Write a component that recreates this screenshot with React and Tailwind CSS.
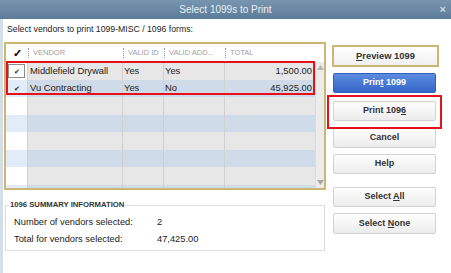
import { Fragment } from "react";

const rows = [
  { vendor: "Middlefield Drywall", validId: "Yes", validAddr: "Yes", total: "1,500.00", checked: true, focus: true },
  { vendor: "Vu Contracting", validId: "Yes", validAddr: "No", total: "45,925.00", checked: true },
  {}, {}, {}, {}, {}, {},
];

const Sep = () => (
  <span className="h-[10px] border-l border-dotted border-[#9a9a9a] mr-[4px] shrink-0" />
);

const Btn = ({ children, className = "" }) => (
  <div
    className={`w-[103px] ml-[1px] h-[20px] flex items-center justify-center rounded-[2px] border border-[#d2d2d2] bg-gradient-to-b from-[#fefefe] to-[#ececec] text-[9px] font-bold text-[#333] ${className}`}
  >
    {children}
  </div>
);

export default function App() {
  return (
    <div className="relative w-[451px] h-[273px] overflow-hidden bg-white flex flex-col font-['Liberation_Sans',Arial,sans-serif]">
      {/* Title bar */}
      <div className="h-[19px] shrink-0 grid grid-cols-[1fr_auto_1fr] items-center bg-gradient-to-b from-[#7895b0] to-[#5c7c99]">
        <span />
        <span className="text-[10px] text-[#eaf0f5]">Select 1099s to Print</span>
        <span className="justify-self-end pr-[5px] text-[11px] font-bold leading-none text-[#cfd8e1]">×</span>
      </div>

      {/* Body */}
      <div className="flex-1 flex border-l-[3px] border-[#d4dee8]">
        {/* Left column */}
        <div className="w-[322px] ml-[1px] flex flex-col">
          <p className="h-[23px] pl-[3px] pt-[4px] text-[8.7px] leading-[12px] text-[#222]">
            Select vendors to print 1099-MISC / 1096 forms:
          </p>

          {/* Table */}
          <div className="h-[148px] border-2 border-[#cbb773] bg-white overflow-hidden">
            {/* Header */}
            <div className="h-[18px] flex items-center text-[7.5px] text-[#a0a0a0] uppercase">
              <div className="w-[22px] flex justify-center pl-[1px] text-[11px] font-bold text-black leading-none">✓</div>
              <div className="w-[95px] flex items-center"><Sep />Vendor</div>
              <div className="w-[41px] flex items-center"><Sep />Valid ID</div>
              <div className="w-[61px] flex items-center"><Sep />Valid Add...</div>
              <div className="w-[90px] flex items-center"><Sep />Total</div>
            </div>

            {/* Rows + scrollbar */}
            <div className="flex">
              <div className="w-[309px]">
                {rows.map((r, i) => {
                  const odd = i % 2 === 0;
                  const bg = odd ? "bg-[#e7e7e7]" : "bg-[#cfdbe8]";
                  return (
                    <div key={i} className={`h-[17.5px] flex text-[9.4px] text-[#222] ${bg}`}>
                      <div className={`w-[22px] border-r border-[#d0d0d0] p-[2px] ${odd ? "bg-white" : "bg-[#e2ecf8]"}`}>
                        <div
                          className={`h-full flex items-center justify-center pt-[2px] text-[7px] text-[#2a2a2a] ${r.focus ? "border border-[#8c8c8c]" : ""}`}
                        >
                          {r.checked ? "✔" : ""}
                        </div>
                      </div>
                      <div className="w-[95px] border-r border-[#d0d0d0] flex items-center pl-[2px]">{r.vendor}</div>
                      <div className="w-[41px] border-r border-[#d0d0d0] flex items-center pl-[1px]">{r.validId}</div>
                      <div className="w-[61px] border-r border-[#d0d0d0] flex items-center pl-[1px]">{r.validAddr}</div>
                      <div className="w-[90px] flex items-center justify-end pr-[3px]">{r.total}</div>
                    </div>
                  );
                })}
              </div>
              <div className="w-[9px] h-[126px] bg-[#ececec] border-l border-[#dcdcdc] flex flex-col items-center justify-between py-[3px]">
                <svg width="7" height="5" viewBox="0 0 7 5"><path d="M0 5 L3.5 0 L7 5 Z" fill="#b5b5b5" /></svg>
                <svg width="7" height="5" viewBox="0 0 7 5"><path d="M0 0 L3.5 5 L7 0 Z" fill="#a8a8a8" /></svg>
              </div>
            </div>
          </div>

          {/* Summary */}
          <fieldset className="mt-[10px] ml-[1px] w-[320px] border border-[#dcdcdc] pb-[1px]">
            <legend className="ml-[3px] px-[1px] text-[7.7px] leading-[10px] font-bold text-[#333]">
              1096 SUMMARY INFORMATION
            </legend>
            <div className="grid grid-cols-[143px_1fr] pl-[8px] pt-[4px] text-[9.3px] text-[#222]">
              {[
                ["Number of vendors selected:", "2"],
                ["Total for vendors selected:", "47,425.00"],
              ].map(([k, v]) => (
                <Fragment key={k}>
                  <span className="h-[17.5px] flex items-center">{k}</span>
                  <span className="h-[17.5px] flex items-center">{v}</span>
                </Fragment>
              ))}
            </div>
          </fieldset>
        </div>

        {/* Right column buttons */}
        <div className="ml-[6px] pt-[26px] flex flex-col">
          <div className="w-[107px] h-[22px] flex items-center justify-center border-2 border-[#cbb773] bg-gradient-to-b from-[#ffffff] to-[#f0f0f0] text-[9.4px] font-bold text-[#333]">
            <span><u>P</u>review 1099</span>
          </div>
          <div className="mt-[6px] w-[103px] ml-[1px] h-[20px] flex items-center justify-center rounded-[2px] border border-[#2f5fbb] bg-gradient-to-b from-[#5b8ce0] to-[#3566c8] text-[9px] font-bold text-white">
            <span>Prin<u>t</u> 1099</span>
          </div>
          <Btn className="mt-[8px]"><span>Print 109<u>6</u></span></Btn>
          <Btn className="mt-[7px]">Cancel</Btn>
          <Btn className="mt-[6px]">Help</Btn>
          <Btn className="mt-[13px]"><span>Select <u>A</u>ll</span></Btn>
          <Btn className="mt-[6px] h-[21px]"><span>Select <u>N</u>one</span></Btn>
        </div>
      </div>

      {/* Annotation rectangles */}
      <div className="absolute left-[6px] top-[61px] w-[309px] h-[34px] border-2 border-[#e5121a]" />
      <div className="absolute left-[327px] top-[95px] w-[115px] h-[34px] border-2 border-[#e5121a]" />
    </div>
  );
}
